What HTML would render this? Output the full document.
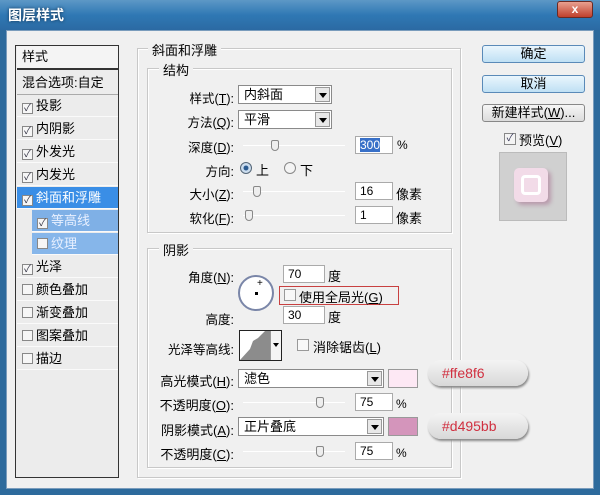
<!DOCTYPE html>
<html><head><meta charset="utf-8"><style>
*{box-sizing:border-box;margin:0;padding:0}
body{width:600px;height:495px;overflow:hidden;background:#2d6a9c;font-family:"Liberation Sans","Noto Sans CJK SC",sans-serif;font-size:12px;color:#000;position:relative}
.abs{position:absolute}
.title{left:0;top:0;width:600px;height:30px;background:linear-gradient(#5d98c6,#2f78b4 50%,#2b6aa3);}
.title span{position:absolute;left:8px;top:5px;color:#fff;font-weight:bold;font-size:14px;text-shadow:0 0 3px #103050}
.body{left:6px;top:30px;width:588px;height:459px;background:#f0f0f0;border:1px solid #7a9cbc}
.list{left:15px;top:45px;width:104px;height:433px;background:#ececec;border:1px solid #333}
.it{position:absolute;left:1px;width:101px;height:22px;line-height:22px;font-size:13px;padding-left:5px;border-bottom:1px solid #fafafa}
.cb{display:inline-block;width:11px;height:11px;border:1px solid #888;background:#f6f6f6;vertical-align:-1px;margin-right:3px;font-size:10px;line-height:9px;text-align:center;color:#334}
.fs{border:1px solid #c8c8c8;box-shadow:1px 1px 0 #fff inset,1px 1px 0 #fff}
.lg{position:absolute;background:#f0f0f0;padding:0 4px;font-size:13px}
.lbl{position:absolute;font-size:12.5px;text-align:right;width:120px}
.sel{position:absolute;height:19px;background:#fff;border:1px solid #8a8a8a;font-size:13px;line-height:17px;padding-left:5px}
.sel i{position:absolute;right:1px;top:1px;width:15px;height:15px;background:#e8e8e8;border:1px solid #999}
.sel i:after{content:"";position:absolute;left:3px;top:5px;border:4px solid transparent;border-top:5px solid #000}
.inp{position:absolute;width:38px;height:18px;background:#fff;border:1px solid #aaa;font-size:12px;line-height:16px;padding-left:4px}
.sl{position:absolute;height:1px;background:#999;border-bottom:1px solid #fff}
.th{position:absolute;width:8px;height:11px;border:1px solid #888;background:#eee;border-radius:2px 2px 4px 4px;top:-5px}
.btn{position:absolute;left:482px;width:103px;height:18px;border:1px solid #5a8ab8;border-radius:3px;background:linear-gradient(#eaf6fd,#bfe0f4);text-align:center;font-size:13px;line-height:16px}
.pill{position:absolute;left:428px;width:100px;height:26px;border-radius:13px;background:linear-gradient(#f4f4f4,#d8d8d8);box-shadow:1px 2px 2px #888;color:#d03040;font-size:14px;line-height:26px;padding-left:14px}
</style></head><body>
<div class="abs title"><span>图层样式</span></div>
<div class="abs" style="left:557px;top:1px;width:36px;height:17px;border:1px solid #6b2a24;border-radius:3px;background:linear-gradient(#e8a090,#c0402c);color:#fff;font-weight:bold;text-align:center;line-height:15px">x</div>
<div class="abs body"></div>
<div class="abs list">
<div class="it" style="top:0;height:24px;border-bottom:2px solid #333;background:#f4f4f4">样式</div>
<div class="it" style="top:26px;height:23px;border-bottom:1px solid #aaa">混合选项:自定</div>
<div class="it" style="top:49px"><span class="cb">✓</span>投影</div>
<div class="it" style="top:72px"><span class="cb">✓</span>内阴影</div>
<div class="it" style="top:95px"><span class="cb">✓</span>外发光</div>
<div class="it" style="top:118px"><span class="cb">✓</span>内发光</div>
<div class="it" style="top:141px;background:#3a8ee6;color:#fff"><span class="cb">✓</span>斜面和浮雕</div>
<div class="it" style="top:164px;left:16px;width:86px;background:#7fb0e6;color:#e8f0ff"><span class="cb">✓</span>等高线</div>
<div class="it" style="top:187px;left:16px;width:86px;background:#86b6ea;color:#e8f0ff"><span class="cb"></span>纹理</div>
<div class="it" style="top:210px"><span class="cb">✓</span>光泽</div>
<div class="it" style="top:233px"><span class="cb"></span>颜色叠加</div>
<div class="it" style="top:256px"><span class="cb"></span>渐变叠加</div>
<div class="it" style="top:279px"><span class="cb"></span>图案叠加</div>
<div class="it" style="top:302px"><span class="cb"></span>描边</div>
</div>
<div class="abs fs" style="left:137px;top:48px;width:324px;height:430px"></div>
<div class="lg" style="left:148px;top:40px">斜面和浮雕</div>
<div class="abs fs" style="left:147px;top:68px;width:305px;height:165px"></div>
<div class="lg" style="left:159px;top:60px">结构</div>
<div class="lbl" style="left:114px;top:88px">样式(<u>T</u>):</div>
<div class="sel" style="left:238px;top:85px;width:94px">内斜面<i></i></div>
<div class="lbl" style="left:114px;top:112px">方法(<u>Q</u>):</div>
<div class="sel" style="left:238px;top:110px;width:94px">平滑<i></i></div>
<div class="lbl" style="left:114px;top:137px">深度(<u>D</u>):</div>
<div class="sl" style="left:243px;top:145px;width:102px"><div class="th" style="left:28px"></div></div>
<div class="inp" style="left:355px;top:136px"><span style="background:#3870c8;color:#fff">300</span></div>
<div class="abs" style="left:397px;top:138px">%</div>
<div class="lbl" style="left:114px;top:161px">方向:</div>
<div class="abs" style="left:240px;top:162px;width:12px;height:12px;border-radius:50%;border:1px solid #567;background:radial-gradient(#2a5a90 30%,#cde 40%)"></div>
<div class="abs" style="left:256px;top:160px;font-size:13px">上</div>
<div class="abs" style="left:284px;top:162px;width:12px;height:12px;border-radius:50%;border:1px solid #888;background:#f4f4f4"></div>
<div class="abs" style="left:300px;top:160px;font-size:13px">下</div>
<div class="lbl" style="left:114px;top:184px">大小(<u>Z</u>):</div>
<div class="sl" style="left:243px;top:191px;width:102px"><div class="th" style="left:10px"></div></div>
<div class="inp" style="left:355px;top:182px">16</div>
<div class="abs" style="left:396px;top:184px;font-size:13px">像素</div>
<div class="lbl" style="left:114px;top:208px">软化(<u>F</u>):</div>
<div class="sl" style="left:243px;top:215px;width:102px"><div class="th" style="left:2px"></div></div>
<div class="inp" style="left:355px;top:206px">1</div>
<div class="abs" style="left:396px;top:208px;font-size:13px">像素</div>

<div class="abs fs" style="left:147px;top:248px;width:305px;height:220px"></div>
<div class="lg" style="left:159px;top:240px">阴影</div>
<div class="lbl" style="left:114px;top:267px">角度(<u>N</u>):</div>
<div class="inp" style="left:283px;top:265px;width:42px">70</div>
<div class="abs" style="left:328px;top:266px;font-size:13px">度</div>
<div class="abs" style="left:238px;top:275px;width:36px;height:36px;border-radius:50%;border:2px solid #7a86a8;background:#fff"></div>
<div class="abs" style="left:255px;top:292px;width:3px;height:3px;background:#000"></div>
<div class="abs" style="left:257px;top:278px;font-size:10px">+</div>
<div class="abs" style="left:279px;top:286px;width:120px;height:19px;border:1px solid #c84040"></div>
<div class="abs" style="left:284px;top:289px;width:12px;height:12px;border:1px solid #999;background:#f8f8f8"></div>
<div class="abs" style="left:299px;top:287px;font-size:13px">使用全局光(<u>G</u>)</div>
<div class="lbl" style="left:114px;top:309px">高度:</div>
<div class="inp" style="left:283px;top:306px;width:42px">30</div>
<div class="abs" style="left:328px;top:307px;font-size:13px">度</div>
<div class="lbl" style="left:114px;top:339px">光泽等高线:</div>
<div class="abs" style="left:239px;top:330px;width:43px;height:31px;border:1px solid #222;background:#fff;overflow:hidden"><svg width="30" height="29"><polygon points="0,29 10,18 13,10 18,7 22,3 25,0 30,0 30,29" fill="#8c8c8c"/></svg><div style="position:absolute;right:0;top:0;width:11px;height:29px;border-left:1px solid #999;background:#f4f4f4"><div style="margin:12px 0 0 2px;border:3px solid transparent;border-top:4px solid #000;width:0"></div></div></div>
<div class="abs" style="left:297px;top:339px;width:12px;height:12px;border:1px solid #999;background:#f8f8f8"></div>
<div class="abs" style="left:313px;top:337px;font-size:13px">消除锯齿(<u>L</u>)</div>
<div class="lbl" style="left:114px;top:371px;font-size:13px">高光模式(<u>H</u>):</div>
<div class="sel" style="left:238px;top:369px;width:146px">滤色<i></i></div>
<div class="abs" style="left:388px;top:369px;width:30px;height:19px;border:1px solid #999;background:#fde8f4"></div>
<div class="lbl" style="left:114px;top:395px;font-size:13px">不透明度(<u>O</u>):</div>
<div class="sl" style="left:243px;top:402px;width:102px"><div class="th" style="left:73px"></div></div>
<div class="inp" style="left:355px;top:393px">75</div>
<div class="abs" style="left:396px;top:397px">%</div>
<div class="lbl" style="left:114px;top:420px;font-size:13px">阴影模式(<u>A</u>):</div>
<div class="sel" style="left:238px;top:417px;width:146px">正片叠底<i></i></div>
<div class="abs" style="left:388px;top:417px;width:30px;height:19px;border:1px solid #999;background:#d495bb"></div>
<div class="lbl" style="left:114px;top:444px;font-size:13px">不透明度(<u>C</u>):</div>
<div class="sl" style="left:243px;top:451px;width:102px"><div class="th" style="left:73px"></div></div>
<div class="inp" style="left:355px;top:442px">75</div>
<div class="abs" style="left:396px;top:446px">%</div>
<div class="pill" style="top:360px">#ffe8f6</div>
<div class="pill" style="top:413px">#d495bb</div>

<div class="btn" style="top:45px">确定</div>
<div class="btn" style="top:75px">取消</div>
<div class="btn" style="top:104px;border-color:#888;background:linear-gradient(#f6f6f6,#dcdcdc)">新建样式(<u>W</u>)...</div>
<div class="abs" style="left:504px;top:133px;width:12px;height:12px;border:1px solid #888;background:#f4f4f4;font-size:10px;line-height:10px;text-align:center;color:#335">✓</div>
<div class="abs" style="left:519px;top:130px;font-size:13px">预览(<u>V</u>)</div>
<div class="abs" style="left:499px;top:152px;width:68px;height:69px;background:#d0d0d0;border:1px solid #bbb"></div>
<div class="abs" style="left:514px;top:168px;width:34px;height:34px;background:#f2dbe8;border-radius:5px;box-shadow:3px 3px 4px #b89aac"><div style="margin:7px;width:20px;height:20px;border:3px solid #fff;border-radius:4px"></div></div>
</body></html>
